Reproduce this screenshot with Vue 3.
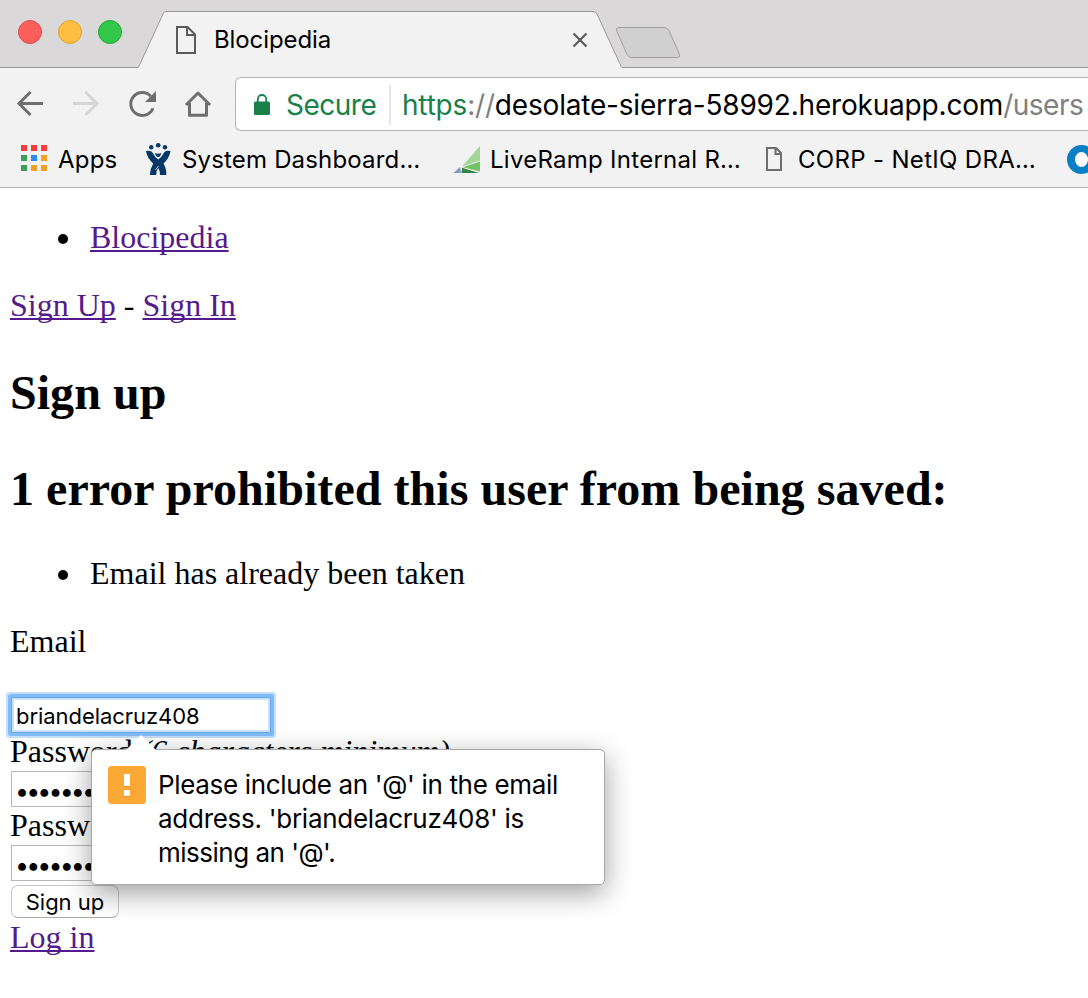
<script setup>
const appColors = [
  '#f63b3b', '#f63b3b', '#f63b3b',
  '#3a9f58', '#2a8cf0', '#f0a024',
  '#3a9f58', '#f0a024', '#f0a024',
]
</script>

<template>
  <div class="window">
    <header class="chrome">
      <div class="tabstrip">
        <div class="lights">
          <i class="light red"></i><i class="light yellow"></i><i class="light green"></i>
        </div>
        <div class="tab">
          <svg class="tab-shape" width="488" height="68" viewBox="0 0 488 68">
            <path d="M4 68 L4.500 67 L28.500 14 Q29.500 11.500 32 11.500 H459 Q461.500 11.500 463 14 L488 67 V68 Z" fill="#f2f2f2" />
            <path d="M0 67.500 H3 Q4.500 67.500 5.500 65 L29 14 Q30 11.500 32 11.500 H459 Q461.500 11.500 463 14 L486.500 65 Q487.500 67.500 488 67.500" fill="none" stroke="#999" />
          </svg>
          <svg class="tab-doc" width="22" height="30" viewBox="0 0 22 30">
            <path d="M2 2 H12.500 L20 9.500 V28 H2 Z M12 2 V10 H20" fill="none" stroke="#5a5a5a" stroke-width="2" />
          </svg>
          <span class="ui title">Blocipedia</span>
          <svg class="close" width="16" height="16" viewBox="0 0 16 16">
            <path d="M1.500 1.500 L14.500 14.500 M14.500 1.500 L1.500 14.500" stroke="#5a5a5a" stroke-width="2.200" />
          </svg>
        </div>
        <svg class="newtab" width="68" height="34" viewBox="0 0 68 34">
          <path d="M4 1.500 H49 Q52.500 1.500 54 4.500 L64.500 28.500 Q65.500 31.500 62.500 31.500 H17 Q13.500 31.500 12 28.500 L1.500 4.500 Q.5 1.500 4 1.500 Z" fill="#d0d0d0" stroke="#a0a0a0" />
        </svg>
      </div>

      <div class="toolbar">
        <svg class="nav" width="220" height="50" viewBox="0 0 220 50">
          <g fill="none" stroke="#6e6e6e" stroke-width="3">
            <path d="M43 23.500 H19 M30.500 12 L19 23.500 L30.500 35" />
            <path d="M73 23.500 H97 M85.500 12 L97 23.500 L85.500 35" stroke="#d6d6d6" />
            <path d="M150.800 16.200 A11.500 11.500 0 1 0 153 28.200" />
            <path d="M189.500 23 V35.300 H206.500 V23 M186 25 L198 13 L210 25" stroke-linejoin="round" />
          </g>
          <path d="M156 11 V22 H145 Z" fill="#6e6e6e" />
        </svg>
        <div class="omnibox">
          <svg class="lock" width="16" height="22" viewBox="0 0 16 22">
            <rect x="0" y="7.500" width="16" height="13.500" rx="1.500" fill="#188048" />
            <path d="M3.800 9 V5.200 A4.200 4.200 0 0 1 12.200 5.200 V9" fill="none" stroke="#188048" stroke-width="1.800" />
          </svg>
          <span class="ui secure">Secure</span>
          <span class="ui url"><span class="scheme">https</span><span class="dim">://</span>desolate-sierra-58992.herokuapp.com<span class="dim path">/users</span></span>
        </div>
      </div>

      <nav class="bookmarks">
        <div class="apps-grid">
          <svg width="26" height="26" viewBox="0 0 26 26">
            <rect v-for="(c, i) in appColors" :key="i" :x="(i % 3) * 10" :y="Math.floor(i / 3) * 10" width="6" height="6" :fill="c" />
          </svg>
        </div>
        <span class="ui mark apps">Apps</span>
        <svg class="jira" width="26" height="34" viewBox="0 0 26 34">
          <g fill="#063769">
            <circle cx="5.200" cy="5.300" r="2.200" /><circle cx="12.200" cy="3.300" r="2.300" /><circle cx="19" cy="5.300" r="2.200" />
            <path d="M0 9 Q5.500 7.500 7.500 12 Q9 15.500 12.200 17.500 Q15.500 15.500 17.200 12 Q19 7.500 24.500 9 Q23.500 16 17.500 21.500 Q20.800 27 20.200 33 H14 Q14.200 28.500 12.200 26 Q10.200 28.500 10.200 33 H3.800 Q4 27 7.200 21.500 Q1 16 0 9 Z" />
            <path d="M9 11 Q12 12.300 15.300 11 Q14.500 14.800 12.200 15.300 Q9.800 14.800 9 11 Z" />
          </g>
          <path d="M12.500 24 L9.500 28" stroke="#f2f2f2" stroke-width=".8" />
        </svg>
        <span class="ui mark system">System Dashboard…</span>
        <svg class="ramp" width="28" height="28" viewBox="0 0 28 28">
          <path d="M27 0 V14.500 L9 20.500 Z" fill="#a4d69b" />
          <path d="M27 15.500 V25.500 L10 21.300 Z" fill="#72c267" />
          <path d="M9 21.800 L26 27 H8.500 Z" fill="#358342" />
          <path d="M.5 27 L7 21 L8 27 Z" fill="#789cbd" />
        </svg>
        <span class="ui mark live">LiveRamp Internal R…</span>
        <svg class="doc" width="18" height="26" viewBox="0 0 18 26">
          <path d="M2 2 H11 L16 7 V24 H2 Z M10.500 2 V8 H16" fill="none" stroke="#6d6d6d" stroke-width="2" />
        </svg>
        <span class="ui mark corp">CORP - NetIQ DRA…</span>
        <i class="ring"></i>
      </nav>
    </header>

    <main class="page">
      <ul class="list"><li><a>Blocipedia</a></li></ul>
      <div class="line"><a>Sign Up</a> - <a>Sign In</a></div>
      <h2 class="first">Sign up</h2>
      <h2>1 error prohibited this user from being saved:</h2>
      <ul class="list errors"><li>Email has already been taken</li></ul>
      <div class="line email-label">Email</div>
      <div class="email-wrap">
        <div class="field focused"><span class="ui value">briandelacruz408</span></div>
        <div class="bubble">
          <svg class="arrow" width="34" height="17" viewBox="0 0 34 17">
            <path d="M1 17 L17 1 L33 17 Z" fill="#fff" />
          </svg>
          <svg class="warn" width="38" height="38" viewBox="0 0 38 38">
            <rect width="38" height="38" rx="3.500" fill="#fba834" />
            <path d="M16 8 H22 V20 H16 Z M16 24 H22 V30 H16 Z" fill="#fff" />
            <path d="M16 20.500 H22 M16 30.500 H22" stroke="#f78335" />
          </svg>
          <div class="ui message">
            <div>Please include an '@' in the email</div>
            <div class="m2">address. 'briandelacruz408' is</div>
            <div class="m3">missing an '@'.</div>
          </div>
        </div>
      </div>
      <div class="line">Password <em>(6 characters minimum)</em></div>
      <div class="field password"><span class="dots">•••••••</span></div>
      <div class="line">Password</div>
      <div class="field password"><span class="dots">•••••••</span></div>
      <button class="ui submit" type="button">Sign up</button>
      <div class="line"><a>Log in</a></div>
    </main>
  </div>
</template>

<style>
body { background: #fff; }
</style>

<style scoped>
.window { width: 1088px; height: 998px; overflow: hidden; background: #fff; color: #000; }
svg { display: block; flex: none; }
.ui { font-family: Inter, "Liberation Sans", sans-serif; white-space: nowrap; flex: none; }
.chrome { height: 187px; border-bottom: 1px solid #b4b4b4; background: #f2f2f2; }
.tabstrip { height: 67px; display: flex; background: #dad8d9; border-bottom: 1px solid #999; }
.lights { display: flex; gap: 16px; padding: 20px 0 0 18px; width: 116px; flex: none; }
.light { width: 24px; height: 24px; border-radius: 50%; box-sizing: border-box; }
.red { background: #fd605c; border: 1px solid #df4a48; }
.yellow { background: #fdbe41; border: 1px solid #dfa035; }
.green { background: #34c84a; border: 1px solid #22a932; }
.tab { position: relative; width: 488px; height: 68px; flex: none; display: flex; }
.tab-shape { position: absolute; left: 0; top: 0; }
.tab-doc, .title, .close { position: relative; }
.tab-doc { margin: 25px 0 0 41px; }
.title { margin-left: 17px; width: 358px; margin-top: 24px; font-size: 24px; line-height: 32px; letter-spacing: -.1px; }
.close { margin-top: 32px; }
.newtab { margin: 26px 0 0 -7px; }
.toolbar { height: 64px; display: flex; }
.nav { margin-top: 12px; margin-right: 15px; }
.omnibox { margin-top: 9px; width: 860px; height: 54px; box-sizing: border-box; border: 1px solid #b5b5b5; border-right: 0; border-radius: 6px 0 0 6px; background: #fff; display: flex; flex: none; font-size: 28px; line-height: 55px; }
.lock { margin: 16px 0 0 18px; }
.secure { width: 103px; margin-left: 16px; height: 40px; margin-top: 7px; line-height: 41px; border-right: 2px solid #e6e6e6; color: #188048; letter-spacing: -.5px; }
.url { margin-left: 11px; letter-spacing: -.19px; }
.scheme { color: #188048; }
.dim { color: #808080; }
.path { letter-spacing: -.5px; }
.bookmarks { height: 55px; display: flex; }
.mark { font-size: 24px; line-height: 56px; }
.apps-grid { margin: 13px 11px 0 21px; }
.apps { width: 88px; letter-spacing: .2px; }
.jira { margin-top: 10px; margin-right: 10px; }
.system { width: 271px; letter-spacing: .17px; }
.ramp { margin: 14px 9px 0 0; }
.live { width: 274px; letter-spacing: .27px; }
.doc { margin: 14px 15px 0 1px; }
.corp { width: 269px; letter-spacing: .32px; }
.ring { width: 29px; height: 29px; box-sizing: border-box; border: 7.500px solid #087fc4; border-width: 7px 8px; border-radius: 50%; margin-top: 13px; flex: none; background: #fff; }

.page { padding: 31px 10px 0; font-family: "Liberation Serif", "Times New Roman", serif; font-size: 32px; line-height: 36px; }
.page a { color: #551a8b; text-decoration: underline; text-decoration-thickness: 2px; text-decoration-skip-ink: none; text-underline-offset: 2px; }
.list { list-style: none; margin: 0 0 32px; padding: 0 0 0 80px; }
.list li { display: flex; align-items: center; }
.list li::before { content: ""; width: 10px; height: 10px; border-radius: 50%; background: #000; margin: 4px 22px 0 -32px; }
.line { height: 36px; white-space: nowrap; }
h2 { font-size: 48px; line-height: 56px; height: 56px; margin: 0 0 40px; white-space: nowrap; letter-spacing: .045px; }
h2.first { margin-top: 42px; }
h2:not(.first) { margin-bottom: 38px; }
.email-label { margin-bottom: 38px; }
.email-wrap { position: relative; height: 36px; }
.field { box-sizing: border-box; width: 260px; height: 36px; margin-left: 1px; border: 1px solid #b8b8b8; background: #fff; display: flex; align-items: center; padding-left: 4px; }
.focused { border: 1px solid #68a6e8; border-radius: 1px; box-shadow: inset 0 0 0 2px #c9e1fb, 0 0 0 3px #80bbfa, 0 0 0 5px #c5dffb; }
.value { font-size: 22px; letter-spacing: -.06px; padding-top: 2px; }
.password { margin-top: 2px; }
.dots { font-family: Inter, sans-serif; font-size: 25px; letter-spacing: -2.900px; margin-left: -1px; padding-top: 3px; }
.submit { display: block; margin: 4px 0 1px 1px; width: 108px; height: 33px; box-sizing: border-box; padding: 0; border: 1px solid #c8c8c8; border-bottom-color: #aaa; border-radius: 7px; background: #fff; color: #000; font-size: 22px; }
.bubble { position: absolute; z-index: 2; left: 81px; top: 52px; width: 514px; height: 136px; box-sizing: border-box; border: 1px solid #a8a8a8; border-radius: 5px; background: #fff; box-shadow: 0 8px 28px rgba(0, 0, 0, .38); display: flex; padding: 16px; }
.arrow { position: absolute; left: 32px; top: -16px; }
.message { font-size: 26px; line-height: 34px; margin-left: 12px; margin-top: 2px; letter-spacing: -.34px; }
.m2 { letter-spacing: -.27px; }
.m3 { letter-spacing: -.5px; }
</style>
